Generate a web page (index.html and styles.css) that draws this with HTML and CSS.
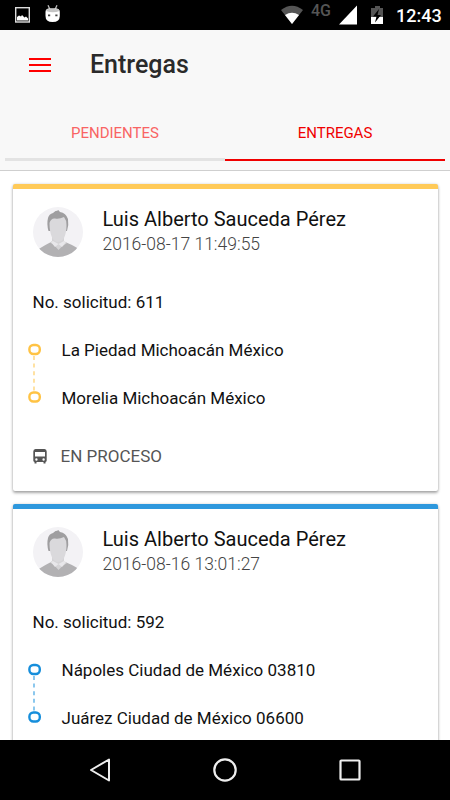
FILE: index.html
```html
<!DOCTYPE html>
<html lang="es">
<head>
<meta charset="utf-8">
<title>Entregas</title>
<link rel="stylesheet" href="styles.css">
</head>
<body>
<svg class="defs" width="0" height="0" aria-hidden="true">
  <defs>
    <clipPath id="round"><circle cx="25" cy="25" r="25"/></clipPath>
    <symbol id="avatar" viewBox="0 0 50 50">
      <g clip-path="url(#round)">
        <rect width="50" height="50" fill="#f3f2f5"/>
        <path d="M4 43Q12 38 19 34.500L31 34.500Q40 38 46 42V50H4Z" fill="#b2b1b3"/>
        <path d="M19 29H31V34.500L34 36L29.500 39L25.500 43L21 38L17 35.500L19 34Z" fill="#d5d4d6"/>
        <path d="M20 34L18 35L22 40L25.500 37Z" fill="#e8e7ea"/>
        <path d="M31 34L33 35L29 40L25.500 37Z" fill="#e8e7ea"/>
        <path d="M15.500 24Q13.500 17 15 11Q16 7 20 6L22.500 4L24.500 3.800L25 2.800L27 5Q33 6 35 12Q36 18 34 24Z" fill="#9f9ea0"/>
        <path d="M16.500 16Q18 11 22 11.500Q26 12.500 31 10Q33.500 13 33.500 18C33.500 29 30 35 25 35C20 35 16.500 28 16.500 16Z" fill="#dad9dc"/>
      </g>
    </symbol>
    <symbol id="route" viewBox="0 0 13 61">
      <path d="M6 13V50" fill="none" stroke="currentColor" stroke-width="1.400" stroke-dasharray="4 3.600" opacity=".7"/>
      <rect x="1.400" y="2" width="10.400" height="9" rx="4" fill="#fff" stroke="currentColor" stroke-width="2.400"/>
      <rect x="1.400" y="49.500" width="10.400" height="9" rx="4" fill="#fff" stroke="currentColor" stroke-width="2.400"/>
    </symbol>
  </defs>
</svg>

<div class="statusbar">
  <svg class="status-left" width="70" height="30" viewBox="0 0 70 30">
    <rect x="15.700" y="7.700" width="13.600" height="14.300" fill="none" stroke="#ddd" stroke-width="1.400"/>
    <path d="M17 20.500V17L19 15.500L21 16.500L22 15L24.500 17.500L26 16.500L28 18.500V20.500Z" fill="#fff"/>
    <path d="M48 5.300L50 9.500M57 5.300L55 9.500" stroke="#bbb" stroke-width="1.300"/>
    <path d="M45.500 12Q45.500 8.500 49 8.500H56Q59.800 8.500 59.800 12V16Q59.800 22 52.600 22Q45.500 22 45.500 16Z" fill="#fff"/>
    <path d="M46 11Q47 8.500 49 8.500H56Q58.500 8.500 59.500 11Q53 13.500 46 11Z" fill="#c4c4c4"/>
    <path d="M48 14.500h2.200v1.800H48zM55.300 14.500h2.200v1.800h-2.200z" fill="#444"/>
  </svg>
  <div class="status-right">
    <svg width="22" height="30" viewBox="0 0 22 30">
      <path d="M0 10Q11 1.500 22 10L11 24Z" fill="#555"/>
      <path d="M4 15Q11 10.500 18 15L11 24Z" fill="#fff"/>
    </svg>
    <span class="network">4G</span>
    <svg width="20" height="30" viewBox="0 0 20 30"><path d="M1 24.500H19V5.500Z" fill="#fff"/></svg>
    <svg class="battery" width="13" height="30" viewBox="0 0 13 30">
      <path d="M0 8H4V6H9V8H12V24H0Z" fill="#555"/>
      <path d="M0 17H12V24H0Z" fill="#fff"/>
      <path d="M8 9L2 16.500H5.500L4 22.500L10 15H6.500Z" fill="#000"/>
    </svg>
    <span class="clock">12:43</span>
  </div>
</div>

<header class="header">
  <div class="toolbar">
    <div class="menu"><i></i><i></i><i></i></div>
    <h1>Entregas</h1>
  </div>
  <nav class="tabs">
    <span class="tab"><b class="t-pend">PENDIENTES</b></span>
    <span class="tab active"><b class="t-ent">ENTREGAS</b></span>
  </nav>
</header>

<main class="content">
  <article class="card yellow">
    <div class="person">
      <svg class="avatar" width="50" height="50"><use href="#avatar"/></svg>
      <div>
        <div class="name">Luis Alberto Sauceda Pérez</div>
        <div class="date">2016-08-17 11:49:55</div>
      </div>
    </div>
    <div class="request">No. solicitud: 611</div>
    <div class="trip">
      <svg class="route" width="13" height="61"><use href="#route"/></svg>
      <div class="places">
        <div>La Piedad Michoacán México</div>
        <div>Morelia Michoacán México</div>
      </div>
    </div>
    <div class="state">
      <svg width="14" height="15" viewBox="0 0 14 15">
        <path fill="#555" fill-rule="evenodd" d="M2.500 0H11.500Q13.700 .3 13.700 2.500V11.500Q13.700 12.500 12.500 13V14.600H10.500V13H3.500V14.600H1.500V13Q.3 12.500 .3 11.500V2.500Q.3 .3 2.500 0ZM2 3V7.500H12V3ZM3.400 9.300A1.200 1.200 0 1 0 3.400 11.700A1.200 1.200 0 1 0 3.400 9.300ZM10.600 9.300A1.200 1.200 0 1 0 10.600 11.700A1.200 1.200 0 1 0 10.600 9.300Z"/>
      </svg>
      <span>EN PROCESO</span>
    </div>
  </article>

  <article class="card blue">
    <div class="person">
      <svg class="avatar" width="50" height="50"><use href="#avatar"/></svg>
      <div>
        <div class="name">Luis Alberto Sauceda Pérez</div>
        <div class="date">2016-08-16 13:01:27</div>
      </div>
    </div>
    <div class="request">No. solicitud: 592</div>
    <div class="trip">
      <svg class="route" width="13" height="61"><use href="#route"/></svg>
      <div class="places">
        <div>Nápoles Ciudad de México 03810</div>
        <div>Juárez Ciudad de México 06600</div>
      </div>
    </div>
  </article>
</main>

<footer class="navbar">
  <svg width="24" height="26" viewBox="0 0 24 26"><path d="M21 2.500V23.500L3 13Z" fill="none" stroke="#eee" stroke-width="2" stroke-linejoin="round"/></svg>
  <svg width="24" height="26" viewBox="0 0 24 26"><circle cx="12" cy="13" r="10.700" fill="none" stroke="#eee" stroke-width="2.200"/></svg>
  <svg width="24" height="26" viewBox="0 0 24 26"><rect x="2.500" y="3.500" width="19" height="19" rx=".8" fill="none" stroke="#eee" stroke-width="2.200"/></svg>
</footer>
</body>
</html>
```
FILE: styles.css
```css
* { box-sizing: border-box; }
body {
  margin: 0;
  width: 450px;
  height: 800px;
  overflow: hidden;
  display: flex;
  flex-direction: column;
  background: #fff;
  color: #111;
  font-family: Roboto, sans-serif;
}
svg { display: block; flex: none; }
.defs { position: absolute; }

.statusbar {
  flex: none;
  height: 30px;
  background: #000;
  color: #fff;
  display: flex;
  justify-content: space-between;
}
.status-right { display: flex; width: 169px; }
.network {
  width: 26px;
  padding-left: 8px;
  font-size: 16px;
  line-height: 22px;
  font-weight: 500;
  color: #555;
  width: 35px;
}
.battery { margin-left: 13px; }
.clock { margin-left: 12px; font-size: 18px; line-height: 31px; font-weight: 500; }

.header {
  flex: none;
  height: 141px;
  background: #f8f8f8;
  border-bottom: 1px solid #cfcfcf;
}
.toolbar { height: 70px; display: flex; align-items: center; padding-left: 29px; }
.menu { width: 61px; display: flex; flex-direction: column; gap: 4px; }
.menu i { width: 22px; height: 2px; background: #f00; }
h1 { margin: 0; font-size: 25px; line-height: 30px; font-weight: 500; color: #2a2a2a; }
.tabs { display: flex; padding: 0 5px; }
.tab {
  width: 220px;
  height: 61px;
  border-bottom: 3px solid #e3e3e3;
  text-align: center;
  font-size: 15px;
  line-height: 67px;
  color: #f96464;
}
.tab b { font-weight: 400; }
.tab.active { border-bottom: 2px solid #f00000; color: #f00000; }

.content { flex: 1; min-height: 0; overflow: hidden; padding: 13px 12.500px 0; }
.card {
  height: 307px;
  margin-bottom: 13px;
  padding: 18px 20px 0;
  background: #fff;
  border-top: 5px solid;
  border-radius: 2px;
  box-shadow: 0 2px 3px rgba(0, 0, 0, .32), 0 0 3px rgba(0, 0, 0, .15);
}
.yellow { border-top-color: #ffca58; }
.blue { border-top-color: #2e98dd; }
.person { height: 50px; display: flex; gap: 20px; }
.name { font-size: 20px; line-height: 25px; white-space: nowrap; }
.date { font-size: 17.500px; line-height: 25px; color: #444; font-weight: 300; }
.request { margin-top: 32px; font-size: 17px; line-height: 26px; }
.trip { display: flex; margin-top: 11px; margin-left: -5px; }
.route { margin-top: 17px; }
.yellow .route { color: #ffc344; }
.blue .route { color: #168edb; }
.places { margin-left: 21px; font-size: 17px; line-height: 48px; white-space: nowrap; }
.state { display: flex; align-items: center; gap: 14px; height: 26px; margin-top: 21px; font-size: 17px; color: #555; }

.navbar {
  flex: none;
  height: 60px;
  background: #000;
  display: flex;
  justify-content: space-between;
  align-items: center;
  padding: 0 88px;
}
```
